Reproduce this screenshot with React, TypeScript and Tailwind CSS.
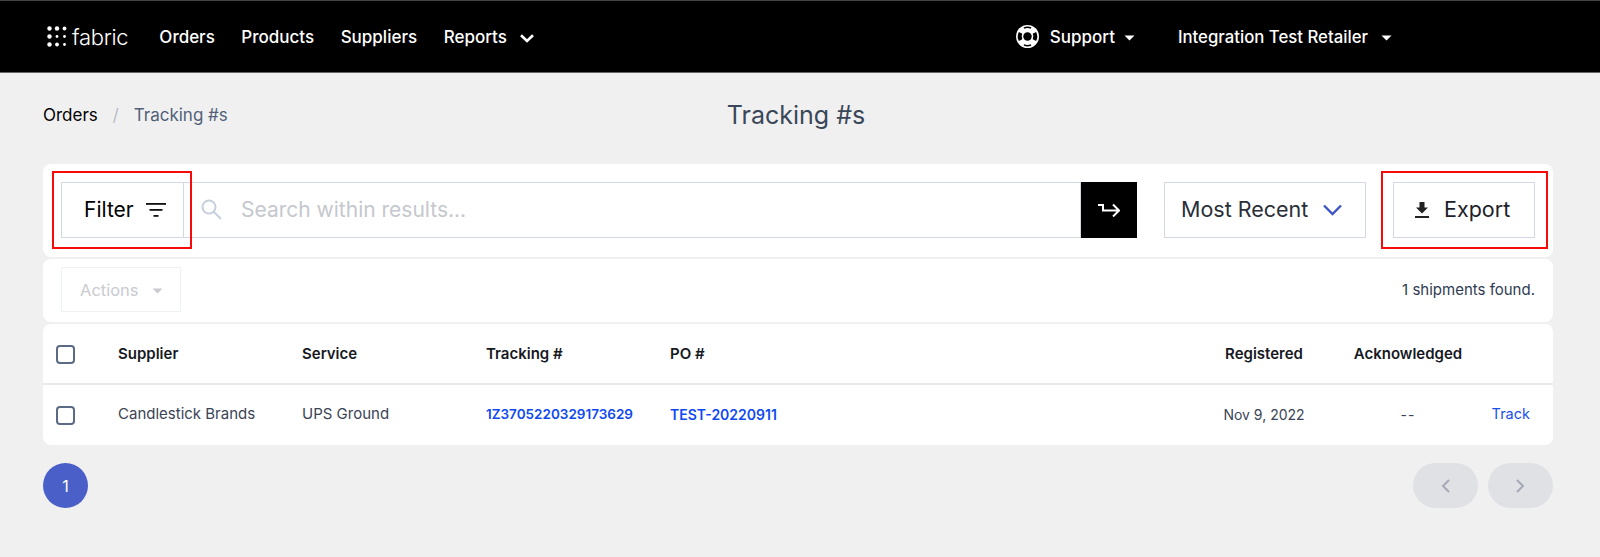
import React from "react";

const Caret = ({ className }: { className: string }) => (
  <svg viewBox="0 0 10 6" className={className} fill="currentColor"><path d="M0 0.5h10L5 5.5z" /></svg>
);

const Logo = () => (
  <div className="flex items-center">
    <svg width="20" height="21" viewBox="0 0 20 21" fill="white">
      <circle cx="2.5" cy="2.5" r="2.2" /><circle cx="10" cy="2.5" r="2.2" /><circle cx="17.5" cy="2.5" r="1.9" />
      <circle cx="2.5" cy="10.5" r="2.2" /><circle cx="10" cy="10.5" r="1.4" /><circle cx="17.5" cy="10.5" r="1.4" />
      <circle cx="2.5" cy="18.5" r="2.2" /><circle cx="10" cy="18.5" r="1.9" /><circle cx="17.5" cy="18.5" r="1.4" />
    </svg>
    <span className="ml-[5px] text-[22px] font-light tracking-[-0.3px] leading-none text-white">fabric</span>
  </div>
);

const Lifebuoy = () => (
  <svg width="23" height="23" viewBox="0 0 24 24" className="mr-[11px]" fill="none">
    <circle cx="12" cy="12" r="12" fill="white" />
    <circle cx="12" cy="12" r="4.4" fill="black" />
    <path d="M4.8 8.2A8 8 0 0 0 4.8 15.800" stroke="black" strokeWidth="4" />
    <path d="M19.200 8.200A8 8 0 0 1 19.200 15.800" stroke="black" strokeWidth="4" />
    <path d="M8.200 3.200A9.600 9.600 0 0 1 15.800 3.200" stroke="black" strokeWidth="1.400" />
    <path d="M8.200 20.800A9.600 9.600 0 0 0 15.800 20.800" stroke="black" strokeWidth="1.400" />
  </svg>
);

const Checkbox = () => (
  <span className="block w-[19px] h-[19px] rounded-[4px] border-2 border-[#5b6b85] bg-white" />
);

const RedBox = ({ className }: { className: string }) => (
  <div className={"absolute border-2 border-[#f60a0a] pointer-events-none " + className} />
);

export default function App() {
  return (
    <div className="min-h-[557px] bg-[#f0f0f0] font-['Inter','Liberation_Sans',sans-serif]">
      <header className="h-[73px] bg-black border-t border-b border-t-[#444] border-b-[#666] flex items-center pl-[47px] text-white text-[17px] font-medium">
        <Logo />
        <nav className="flex items-center ml-[31px] gap-[26.500px] pt-[3px]">
          <span>Orders</span>
          <span>Products</span>
          <span>Suppliers</span>
          <span className="flex items-center">
            Reports
            <svg width="14" height="9" viewBox="0 0 14 9" fill="none" stroke="white" strokeWidth="2.6" className="ml-[13px] mt-[1px]"><path d="M1 1.2 7 7l6-5.8" /></svg>
          </span>
        </nav>
        <div className="ml-auto flex items-center mr-[208px]">
          <Lifebuoy />
          <span className="pt-[3px]">Support</span>
          <Caret className="w-[11px] h-[6px] ml-[9px] mt-[2px]" />
          <span className="ml-[43px] pt-[3px] text-[16.750px]">Integration Test Retailer</span>
          <Caret className="w-[11px] h-[6px] ml-[13px] mt-[2px]" />
        </div>
      </header>

      <div className="px-[43px] pr-[47px]">
        <div className="relative flex items-center h-[82px] pt-[4px]">
          <span className="text-[17px] text-black">Orders</span>
          <span className="ml-[15px] text-[17px] text-[#a5adbb] font-light">/</span>
          <span className="ml-[15px] text-[17px] text-[#52607a]">Tracking #s</span>
          <h1 className="absolute left-0 right-[4px] text-center text-[25px] font-normal text-[#3a4759]">Tracking #s</h1>
        </div>

        <div className="mt-[9px] relative bg-white rounded-[8px] h-[93px] flex items-center pl-[18px] pr-[18px] pb-[2px]">
          <RedBox className="left-[9px] top-[7px] w-[140px] h-[78px]" />
          <RedBox className="right-[5px] top-[7px] w-[167px] h-[78px]" />
          <div className="w-[123px] h-[56px] border border-[#d3d9e4] flex items-center pl-[22px] text-[21px] text-black shrink-0">
            Filter
            <svg width="20" height="16" viewBox="0 0 20 16" className="ml-[12px]" fill="#111"><rect y="1" width="20" height="1.8" /><rect x="3.5" y="7" width="13" height="1.8" /><rect x="7.5" y="13" width="5" height="1.8" /></svg>
          </div>
          <div className="flex-1 h-[56px] border-y border-r border-[#d3d9e4] flex items-center pl-[17px] text-[21px] text-[#c5c8cd]">
            <svg width="21" height="21" viewBox="0 0 21 21" fill="none" stroke="#c6cfde" strokeWidth="2"><circle cx="8" cy="8" r="6.5" /><path d="m13 13 7 7" /></svg>
            <span className="ml-[19px]">Search within results...</span>
          </div>
          <div className="w-[56px] h-[56px] bg-black flex items-center justify-center shrink-0">
            <svg width="22" height="14" viewBox="0 0 22 14" fill="none" stroke="white" strokeWidth="2"><path d="M0 2h5v5.500h15.500M15 1.500l6 6-6 6" /></svg>
          </div>
          <div className="ml-[27px] w-[202px] h-[56px] border border-[#d3d9e4] flex items-center pl-[16px] text-[21.500px] text-[#2a2f38] shrink-0">
            Most Recent
            <svg width="19" height="12" viewBox="0 0 19 12" fill="none" stroke="#3f55c6" strokeWidth="2.400" className="ml-[15px]"><path d="M1 1.500 9.500 10 18 1.500" /></svg>
          </div>
          <div className="ml-[27px] w-[142px] h-[56px] border border-[#d3d9e4] flex items-center pl-[21px] text-[21.500px] text-[#1d2129] shrink-0">
            <svg width="14" height="16" viewBox="0 0 14 16" fill="#222"><path d="M4.500 0h5v5.500H13L7 11.500 1 5.500h3.500z" /><rect y="14" width="14" height="2" /></svg>
            <span className="ml-[15px]">Export</span>
          </div>
        </div>

        <div className="mt-[2px] bg-white rounded-[8px] h-[63px] flex items-center justify-between pl-[18px] pr-[18px] pb-[2px]">
          <div className="w-[120px] h-[45px] border border-[#f0f1f3] flex items-center pl-[18px] pt-[2px] text-[16.500px] text-[#c9cbd0]">
            Actions
            <Caret className="w-[11px] h-[6px] ml-[13px]" />
          </div>
          <span className="text-[15px] text-[#2f3b52] pt-[2px]">1 shipments found.</span>
        </div>

        <div className="mt-[2px] bg-white rounded-[8px] h-[121px] text-[15px]">
          <div className="h-[61px] border-b-2 border-[#e9eaec] pt-[2px] grid grid-cols-[75px_184px_184px_184px_1fr_108px_162px_73px] items-center font-semibold text-[#16191f]">
            <div className="pl-[13px]"><Checkbox /></div>
            <span>Supplier</span>
            <span>Service</span>
            <span>Tracking #</span>
            <span>PO #</span>
            <span className="text-center">Registered</span>
            <span className="text-center pl-[18px]">Acknowledged</span>
            <span />
          </div>
          <div className="h-[58px] grid grid-cols-[75px_184px_184px_184px_1fr_108px_162px_73px] items-center text-[#3a4456]">
            <div className="pl-[13px] pt-[2px]"><Checkbox /></div>
            <span>Candlestick Brands</span>
            <span>UPS Ground</span>
            <span className="font-semibold text-[13.500px] text-[#0f49f2]">1Z3705220329173629</span>
            <span className="font-semibold text-[14px] text-[#0f49f2]">TEST-20220911</span>
            <span className="text-center text-[14px]">Nov 9, 2022</span>
            <span className="text-center pl-[18px] text-[14px] tracking-[1px]">--</span>
            <span className="text-right pr-[23px] text-[14.500px] text-[#1a50ee]">Track</span>
          </div>
        </div>

        <div className="mt-[18px] flex items-center justify-between">
          <div className="w-[45px] h-[45px] rounded-full bg-[#4a5fc8] text-white text-[16px] flex items-center justify-center">1</div>
          <div className="flex gap-[10px]">
            <div className="w-[65px] h-[45px] rounded-full bg-[#e0e1e5] flex items-center justify-center">
              <svg width="9" height="14" viewBox="0 0 9 14" fill="none" stroke="#a6a9b5" strokeWidth="2"><path d="M8 1 2 7l6 6" /></svg>
            </div>
            <div className="w-[65px] h-[45px] rounded-full bg-[#e0e1e5] flex items-center justify-center">
              <svg width="9" height="14" viewBox="0 0 9 14" fill="none" stroke="#a6a9b5" strokeWidth="2"><path d="m1 1 6 6-6 6" /></svg>
            </div>
          </div>
        </div>
      </div>
    </div>
  );
}
